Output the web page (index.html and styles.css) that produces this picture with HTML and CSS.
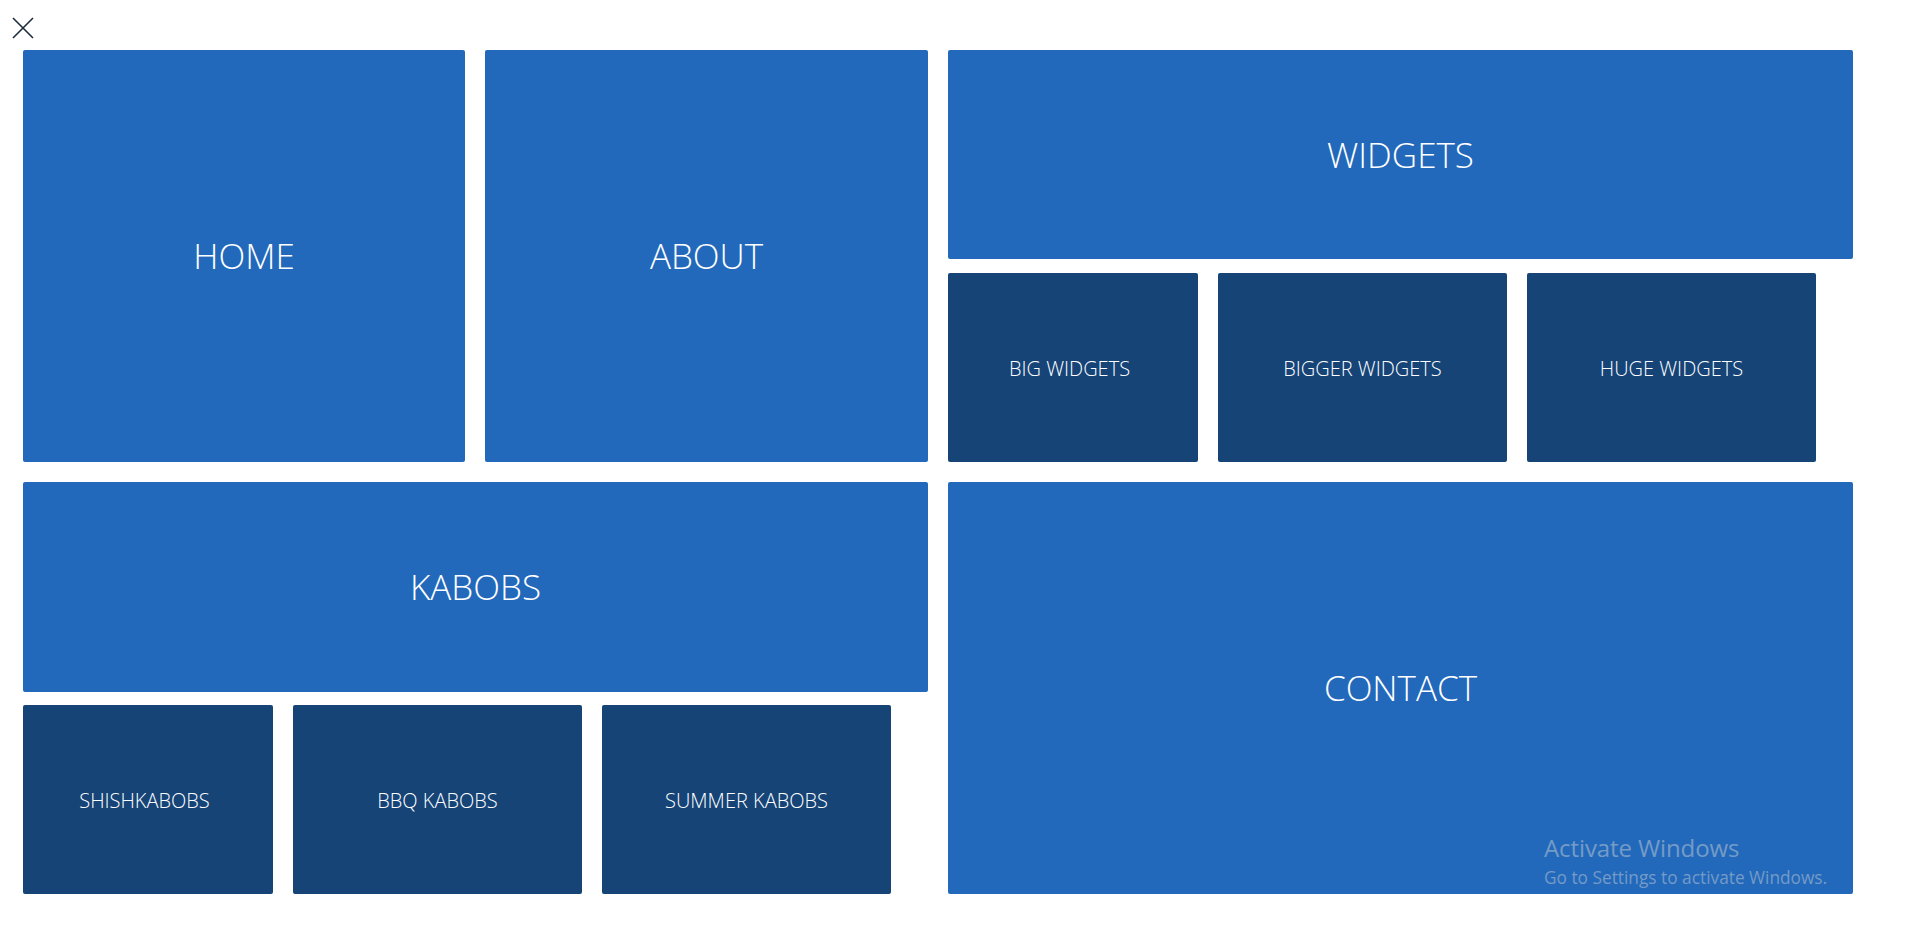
FILE: index.html
```html
<!DOCTYPE html>
<html lang="en">
<head>
<meta charset="utf-8">
<title>Menu</title>
<link rel="stylesheet" href="styles.css">
</head>
<body>
<div class="page">
  <header class="top">
    <button class="close" aria-label="Close">
      <svg width="22" height="22" viewBox="0 0 22 22"><path d="M1 1 L21 21 M21 1 L1 21" stroke="#1c2b3d" stroke-width="1.6" fill="none"/></svg>
    </button>
  </header>
  <main class="grid">
    <div class="pair">
      <a class="tile big">HOME</a>
      <a class="tile big">ABOUT</a>
    </div>
    <div class="group">
      <a class="tile big head">WIDGETS</a>
      <div class="subs">
        <a class="tile sub first">BIG WIDGETS</a>
        <a class="tile sub">BIGGER WIDGETS</a>
        <a class="tile sub">HUGE WIDGETS</a>
      </div>
    </div>
    <div class="group">
      <a class="tile big head kab">KABOBS</a>
      <div class="subs kabsubs">
        <a class="tile sub first">SHISHKABOBS</a>
        <a class="tile sub">BBQ KABOBS</a>
        <a class="tile sub">SUMMER KABOBS</a>
      </div>
    </div>
    <a class="tile big contact">CONTACT</a>
  </main>
</div>
<div class="activate">
  <div class="act-title">Activate Windows</div>
  <div class="act-sub">Go to Settings to activate Windows.</div>
</div>
</body>
</html>
```

FILE: styles.css
```css
* { box-sizing: border-box; }
html, body { margin: 0; padding: 0; background: #fff; }
body { font-family: "Open Sans", "Noto Sans", sans-serif; width: 1907px; height: 931px; overflow: hidden; position: relative; }
.page { padding: 0 0 0 23px; }
.top { height: 50px; position: relative; }
.close {
  position: absolute; left: -11px; top: 16px;
  width: 23px; height: 23px; padding: 0; margin: 0;
  border: 0; background: transparent; display: block;
}
.close svg { display: block; }
.grid {
  display: grid;
  grid-template-columns: 905px 905px;
  grid-template-rows: 412px 412px;
  column-gap: 20px;
  row-gap: 20px;
}
.pair { display: flex; gap: 20px; }
.pair .tile { flex: 0 0 442px; }
.pair .tile + .tile { flex-basis: 443px; }
.tile {
  display: flex; align-items: center; justify-content: center;
  color: #fff; text-decoration: none; border-radius: 2px;
  background: #2269bb; font-weight: 300;
}
.big { font-size: 35px; letter-spacing: 0; padding-bottom: 1px; }
.group { display: flex; flex-direction: column; }
.head { height: 209px; flex: 0 0 209px; }
.kab { height: 210px; flex-basis: 210px; }
.subs { display: flex; gap: 20px; margin-top: 14px; height: 189px; }
.kabsubs { margin-top: 13px; }
.sub { background: #164477; font-size: 20px; width: 289px; flex: 0 0 289px; padding-top: 2px; }
.sub.first { width: 250px; flex-basis: 250px; padding-right: 7px; }
.contact { height: 412px; }
.activate {
  position: absolute; left: 1544px; top: 831px;
  color: rgba(200, 205, 212, 0.5);
  font-family: "Open Sans", "Noto Sans", sans-serif;
  pointer-events: none;
}
.act-title { font-size: 24px; line-height: 33px; letter-spacing: -0.1px; }
.act-sub { font-size: 17.3px; line-height: 24px; margin-top: 2px; }
```
